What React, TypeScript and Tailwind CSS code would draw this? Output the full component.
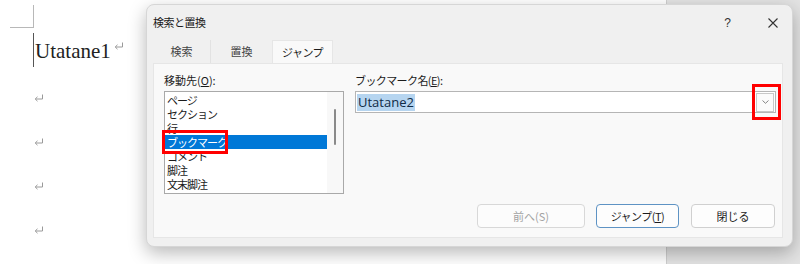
import React from "react";

const jp = { fontFamily: '"Noto Sans CJK JP", "Noto Sans", sans-serif' };

function Ret({ className = "" }: { className?: string }) {
  return (
    <svg width="10" height="9" viewBox="0 0 10 9" className={className}>
      <path d="M8.5 0.5 V5 H1.5" fill="none" stroke="#9a9a9a" strokeWidth="1" />
      <path d="M3.5 2.8 L1.2 5 L3.5 7.2" fill="none" stroke="#9a9a9a" strokeWidth="1" />
    </svg>
  );
}

export default function App() {
  const items = ["ページ", "セクション", "行", "ブックマーク", "コメント", "脚注", "文末脚注"];
  return (
    <div className="relative w-[800px] h-[264px] overflow-hidden bg-white flex" style={jp}>
      {/* document page */}
      <div className="w-[667px] h-full bg-white border-r border-[#cfcfcf] flex flex-col">
        <div className="ml-[10px] mt-[5px] w-[24px] h-[23px] border-r border-b border-[#b8b8b8]" />
        <div className="ml-[33px] mt-[5px] h-[34px] flex items-center border-l border-[#555]">
          <span className="font-['Liberation_Serif',serif] text-[21px] leading-none text-[#222] pl-[1px] mt-[2px]">
            Utatane1
          </span>
          <Ret className="ml-[3px] -mt-[8px]" />
        </div>
        <div className="ml-[34px] mt-[27px] flex flex-col gap-[35px]">
          <Ret />
          <Ret />
          <Ret />
          <Ret />
        </div>
      </div>
      <div className="flex-1 bg-[#e3e3e3]" />

      {/* dialog window */}
      <div className="absolute left-[146px] top-[4px] w-[647px] h-[243px] rounded-[8px] bg-[#f0f0f0] border border-[#d6d6d6] shadow-[0_6px_18px_rgba(0,0,0,0.28)] flex flex-col">
        <div className="h-[35px] flex items-center pl-[6px] pr-[14px]">
          <span className="text-[11px] text-[#1b1b1b] tracking-[-0.5px]">検索と置換</span>
          <span className="ml-auto text-[12px] text-[#333] mr-[37px] font-['Liberation_Sans',sans-serif]">?</span>
          <svg width="10" height="10" viewBox="0 0 10 10">
            <path d="M0.5 0.5 L9.5 9.5 M9.5 0.5 L0.5 9.5" stroke="#333" strokeWidth="1.1" />
          </svg>
        </div>
        <div className="flex pl-[6px] h-[23px]">
          <div className="w-[58px] flex items-center justify-center text-[11px] text-[#444] border-r border-[#e2e2e2]">検索</div>
          <div className="w-[61px] flex items-center justify-center text-[11px] text-[#444]">置換</div>
          <div className="w-[61px] flex items-center justify-center text-[11px] text-[#1b1b1b] tracking-[-0.5px] bg-[#f9f9f9] border-t border-x border-[#e6e6e6]">ジャンプ</div>
        </div>
        <div className="ml-[6px] w-[630px] h-[175px] bg-[#f9f9f9] border border-[#e6e6e6] flex flex-col">
          <div className="flex pl-[10px] pt-[9px]">
            <div className="w-[180px] flex flex-col">
              <div className="text-[11px] leading-[15px] text-[#1b1b1b] h-[18px]">
                移動先(<span className="underline">O</span>):
              </div>
              <div className="relative h-[103px] border border-[#a9a9a9] bg-white flex">
                <div className="flex-1 pt-[1px] flex flex-col">
                  {items.map((t, i) => (
                    <div
                      key={t}
                      className={
                        "h-[14px] leading-[14px] text-[11px] tracking-[-1px] pl-[2px] " +
                        (i === 3 ? "bg-[#0078d7] text-white" : "text-[#1b1b1b]")
                      }
                    >
                      {t}
                    </div>
                  ))}
                </div>
                <div className="w-[16px] bg-[#f8f8f8] flex justify-center pt-[17px]">
                  <div className="w-[2px] h-[36px] bg-[#8a8a8a] rounded-full" />
                </div>
                <div className="absolute left-[-3px] top-[38px] w-[66px] h-[24px] border-[3px] border-[#ff0000]" />
              </div>
            </div>
            <div className="ml-[11px] w-[421px] flex flex-col">
              <div className="text-[11px] leading-[15px] text-[#1b1b1b] h-[18px] tracking-[-0.6px]">
                ブックマーク名(<span className="underline">E</span>):
              </div>
              <div className="relative h-[22px] border border-[#b5b5b5] bg-white flex items-center pl-[1px] pr-[1px]">
                <span className="font-['Open_Sans','Noto_Sans',sans-serif] text-[13px] leading-[17px] bg-[#b6d5f0] text-[#0f2b46] px-[1px]">
                  Utatane2
                </span>
                <div className="ml-auto w-[18px] h-[19px] border border-[#c8c8c8] bg-[#fbfbfb] flex items-center justify-center">
                  <svg width="7" height="4" viewBox="0 0 7 4">
                    <path d="M0.5 0.5 L3.5 3.3 L6.5 0.5" fill="none" stroke="#777" strokeWidth="0.9" />
                  </svg>
                </div>
                <div className="absolute right-[-6px] top-[-8px] w-[29px] h-[36px] border-[3px] border-[#ff0000]" />
              </div>
            </div>
          </div>
          <div className="mt-auto mb-[9px] flex justify-end pr-[7px] gap-[11px]">
            <div className="w-[108px] h-[24px] rounded-[4px] border border-[#d8d8d8] bg-[#fcfcfc] flex items-center justify-center text-[11px] text-[#a3a3a3]">
              前へ(S)
            </div>
            <div className="w-[83px] h-[24px] rounded-[4px] border border-[#5e93c4] bg-[#fdfdfd] flex items-center justify-center text-[11px] text-[#1b1b1b] tracking-[-0.5px]">
              ジャンプ(<span className="underline">T</span>)
            </div>
            <div className="ml-[1px] w-[84px] h-[24px] rounded-[4px] border border-[#d0d0d0] bg-[#fdfdfd] flex items-center justify-center text-[11px] text-[#1b1b1b]">
              閉じる
            </div>
          </div>
        </div>
      </div>
    </div>
  );
}
